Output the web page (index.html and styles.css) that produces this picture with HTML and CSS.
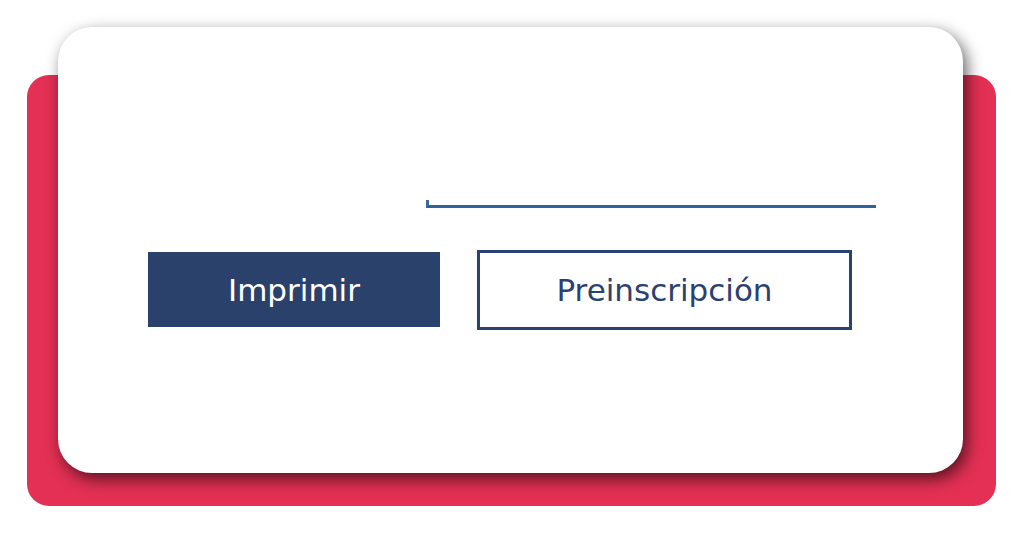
FILE: index.html
```html
<!DOCTYPE html>
<html lang="es">
<head>
<meta charset="utf-8">
<title>Preinscripción</title>
<link rel="stylesheet" href="styles.css">
</head>
<body>
<div class="stage">
  <div class="backdrop"></div>
  <div class="card">
    <div class="field"></div>
    <div class="actions">
      <button class="btn btn-primary" type="button">Imprimir</button>
      <button class="btn btn-outline" type="button">Preinscripción</button>
    </div>
  </div>
</div>
</body>
</html>
```
FILE: styles.css
```css
html, body {
  margin: 0;
  padding: 0;
  background: #ffffff;
}
body {
  width: 1024px;
  height: 536px;
  overflow: hidden;
  font-family: "DejaVu Sans", Verdana, sans-serif;
}
.stage {
  display: grid;
  width: 969px;
  height: 479px;
  margin: 27px 0 0 27px;
}
.backdrop {
  grid-area: 1 / 1;
  margin-top: 48px;
  height: 431px;
  background: #e33054;
  border-radius: 22px;
}
.card {
  grid-area: 1 / 1;
  margin-left: 31px;
  width: 905px;
  height: 446px;
  background: #ffffff;
  border-radius: 34px;
  box-shadow: 4px 6px 16px rgba(0, 0, 0, 0.62);
  box-sizing: border-box;
  padding-top: 173px;
}
.field {
  margin-left: 368px;
  width: 447px;
  height: 4.5px;
  border-left: 3px solid #3a6a9c;
  border-bottom: 3px solid #2f6496;
}
.actions {
  display: flex;
  align-items: center;
  gap: 37px;
  margin: 42px 0 0 90px;
}
.btn {
  font-family: "DejaVu Sans", Verdana, sans-serif;
  font-size: 31px;
  margin: 0;
  padding: 0;
  cursor: pointer;
  box-sizing: border-box;
}
.btn-primary {
  width: 292px;
  height: 75px;
  background: #2a416b;
  color: #ffffff;
  border: none;
}
.btn-outline {
  width: 375px;
  height: 80px;
  background: #ffffff;
  color: #2b4170;
  border: 3px solid #2b4170;
}
```
